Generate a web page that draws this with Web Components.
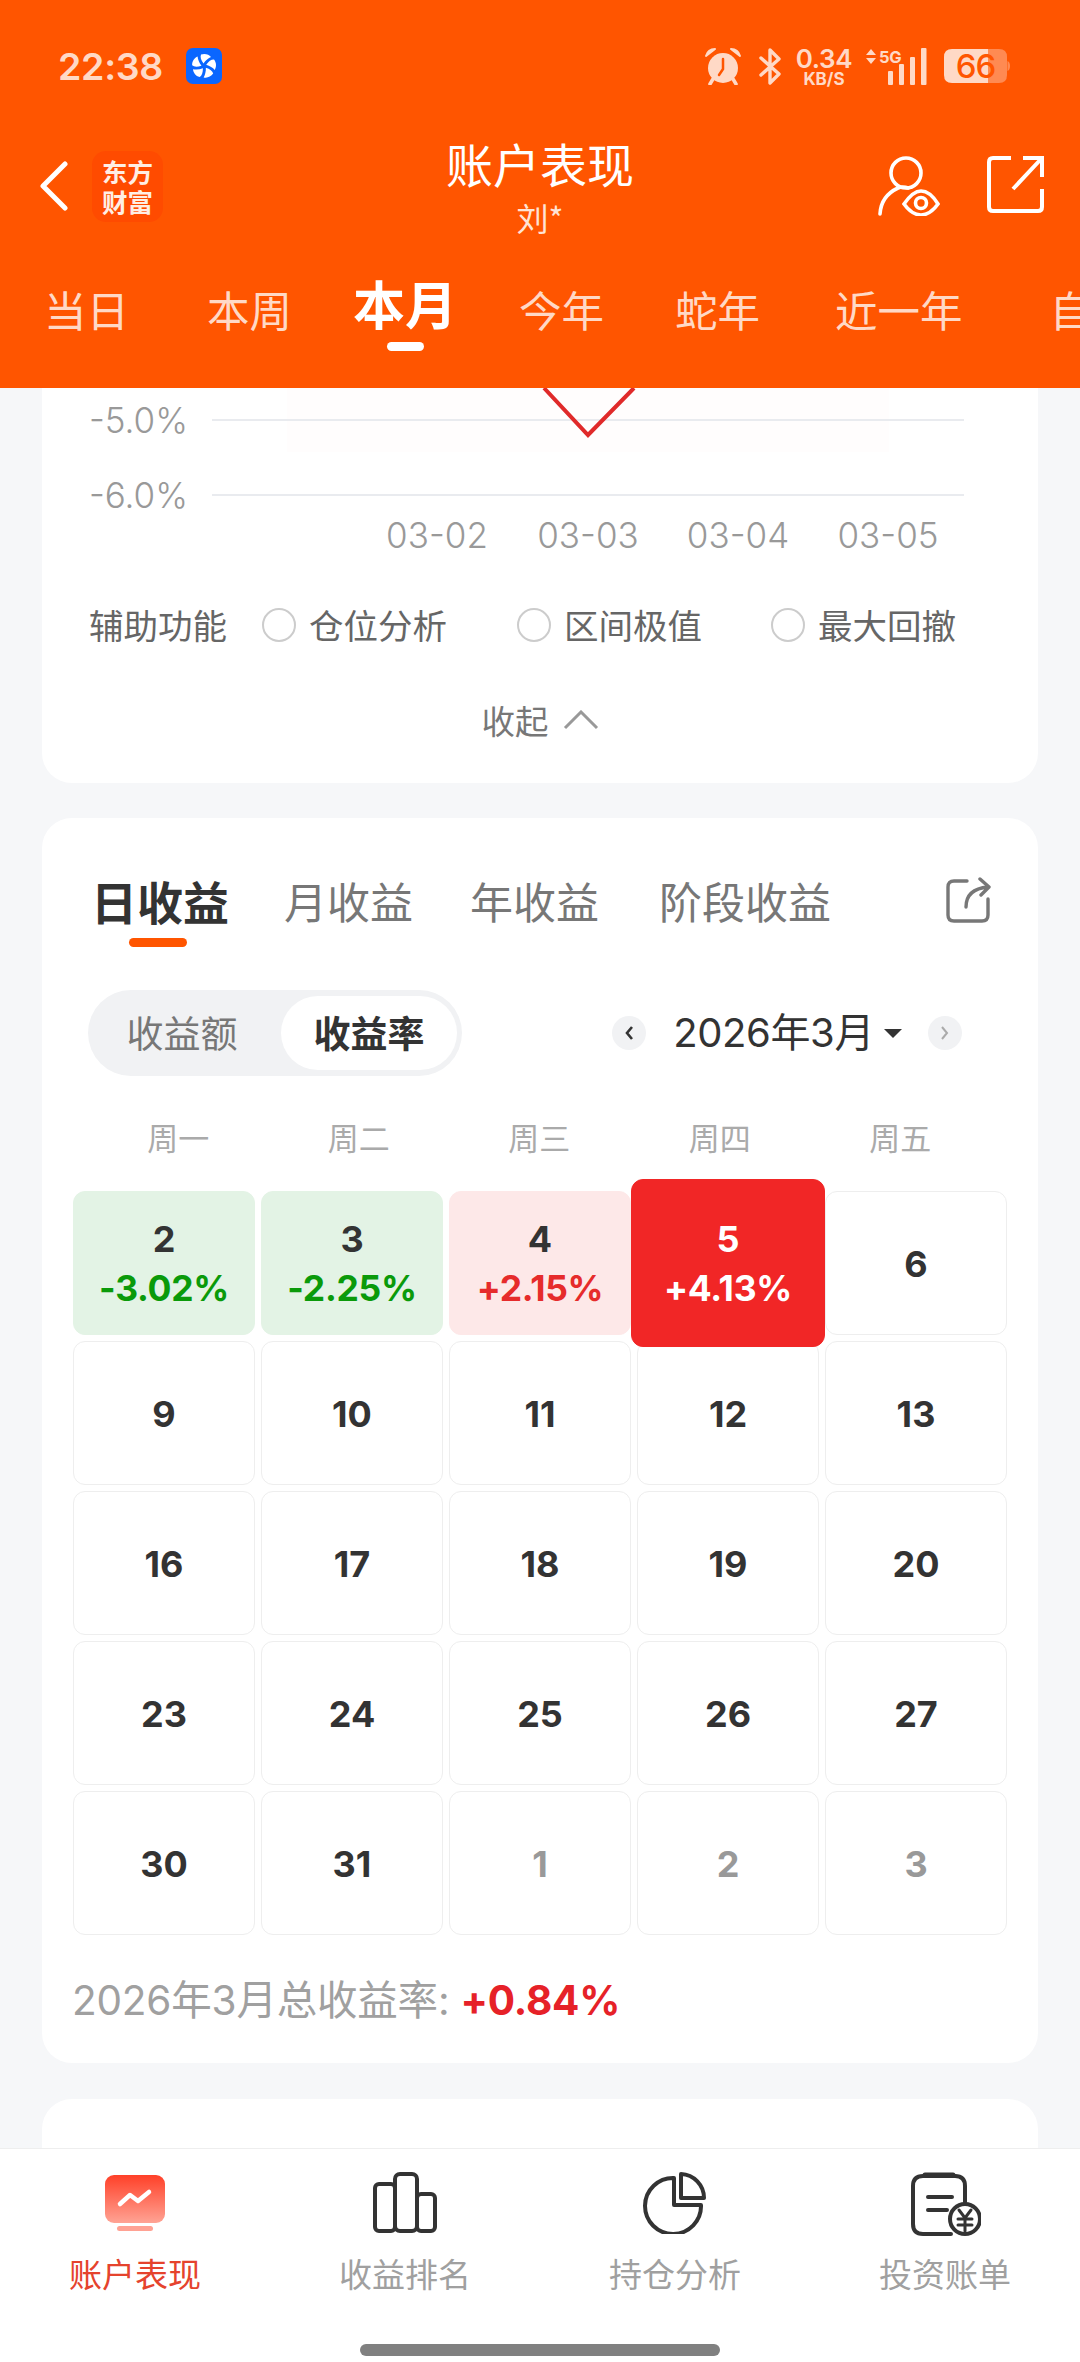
<!DOCTYPE html>
<html lang="zh">
<head>
<meta charset="utf-8">
<title>账户表现</title>
<style>
  html, body { margin: 0; background: #f6f7f9; }
  body { font-family: Inter, "Noto Sans CJK SC", sans-serif; color: #333; }
</style>
</head>
<body>
<phone-page>
  <status-bar slot="top"></status-bar>
  <account-header slot="top" title="账户表现" sub="刘*"></account-header>
  <period-bar slot="top">
    <period-tab gap="44">当日</period-tab>
    <period-tab gap="78">本周</period-tab>
    <period-tab gap="61" active>本月</period-tab>
    <period-tab gap="62">今年</period-tab>
    <period-tab gap="71">蛇年</period-tab>
    <period-tab gap="75">近一年</period-tab>
    <period-tab gap="87">自</period-tab>
  </period-bar>

  <chart-card></chart-card>

  <profit-card>
    <profit-tab active gap="0">日收益</profit-tab>
    <profit-tab gap="55">月收益</profit-tab>
    <profit-tab gap="57">年收益</profit-tab>
    <profit-tab gap="60">阶段收益</profit-tab>

    <cal-cell slot="cells" tone="loss">2<span slot="rate">-3.02%</span></cal-cell>
    <cal-cell slot="cells" tone="loss">3<span slot="rate">-2.25%</span></cal-cell>
    <cal-cell slot="cells" tone="gain">4<span slot="rate">+2.15%</span></cal-cell>
    <cal-cell slot="cells" tone="today">5<span slot="rate">+4.13%</span></cal-cell>
    <cal-cell slot="cells">6</cal-cell>
    <cal-cell slot="cells">9</cal-cell>
    <cal-cell slot="cells">10</cal-cell>
    <cal-cell slot="cells">11</cal-cell>
    <cal-cell slot="cells">12</cal-cell>
    <cal-cell slot="cells">13</cal-cell>
    <cal-cell slot="cells">16</cal-cell>
    <cal-cell slot="cells">17</cal-cell>
    <cal-cell slot="cells">18</cal-cell>
    <cal-cell slot="cells">19</cal-cell>
    <cal-cell slot="cells">20</cal-cell>
    <cal-cell slot="cells">23</cal-cell>
    <cal-cell slot="cells">24</cal-cell>
    <cal-cell slot="cells">25</cal-cell>
    <cal-cell slot="cells">26</cal-cell>
    <cal-cell slot="cells">27</cal-cell>
    <cal-cell slot="cells">30</cal-cell>
    <cal-cell slot="cells">31</cal-cell>
    <cal-cell slot="cells" tone="other">1</cal-cell>
    <cal-cell slot="cells" tone="other">2</cal-cell>
    <cal-cell slot="cells" tone="other">3</cal-cell>
  </profit-card>

  <blank-card></blank-card>

  <bottom-nav slot="bottom">
    <nav-item active>账户表现
      <svg slot="icon" width="64" height="62" viewBox="0 0 64 62">
        <defs><linearGradient id="g" x1="0" y1="0" x2="0" y2="1"><stop offset="0" stop-color="#ff4028"/><stop offset="1" stop-color="#ffa394"/></linearGradient></defs>
        <rect x="2" y="3" width="60" height="48" rx="9" fill="url(#g)"/>
        <rect x="14" y="54" width="36" height="5" rx="2.5" fill="#ffa294"/>
        <path d="M17 32 L27 23 L35 29 L46 20" fill="none" stroke="#fff" stroke-width="4.5" stroke-linecap="round" stroke-linejoin="round"/>
      </svg>
    </nav-item>
    <nav-item>收益排名
      <svg slot="icon" width="64" height="62" viewBox="0 0 64 62" fill="none" stroke="#333" stroke-width="4" stroke-linejoin="round">
        <rect x="2" y="12" width="20" height="47" rx="4"/>
        <rect x="22" y="2" width="22" height="57" rx="5"/>
        <rect x="44" y="22" width="18" height="37" rx="4"/>
      </svg>
    </nav-item>
    <nav-item>持仓分析
      <svg slot="icon" width="64" height="62" viewBox="0 0 64 62" fill="none" stroke="#333" stroke-width="4" stroke-linejoin="round">
        <path d="M31 6 A28 28 0 1 0 58 33 H31 Z"/>
        <path d="M38 2 A24 24 0 0 1 61 26 H38 Z"/>
      </svg>
    </nav-item>
    <nav-item>投资账单
      <svg slot="icon" width="72" height="64" viewBox="0 0 72 64" fill="none" stroke="#333" stroke-width="4" stroke-linecap="round">
        <path d="M46 4 H14 Q4 4 4 14 V52 Q4 62 14 62 H42"/>
        <path d="M26 4 H46 Q56 4 56 14 V30"/>
        <path d="M16 3 H44" stroke-width="5"/>
        <path d="M19 25 H43 M19 38 H38"/>
        <circle cx="56" cy="47" r="15" fill="#fff"/>
        <path d="M50 38 L56 46 L62 38 M49 47 H63 M49 53 H63 M56 46 V59" stroke-width="3"/>
      </svg>
    </nav-item>
  </bottom-nav>
</phone-page>

<script>
const pageTemplate = document.createElement('template')
pageTemplate.innerHTML = `
  <style>
    :host { display: flex; flex-direction: column; width: 1080px; height: 2362px; overflow: hidden; background: #f6f7f9; }
    header { flex: none; height: 388px; background: #ff5500; position: relative; z-index: 2; overflow: hidden; }
    main { flex: 1; min-height: 0; overflow: hidden; padding: 0 42px; display: flex; flex-direction: column; gap: 36px; }
    footer { flex: none; }
  </style>
  <header><slot name="top"></slot></header>
  <main><slot></slot></main>
  <footer><slot name="bottom"></slot></footer>
`
customElements.define('phone-page', class extends HTMLElement {
  constructor () {
    super()
    this.attachShadow({ mode: 'open' }).appendChild(pageTemplate.content.cloneNode(true))
  }
})

const statusTemplate = document.createElement('template')
statusTemplate.innerHTML = `
  <style>
    :host { display: flex; align-items: center; height: 132px; padding: 0 70px 0 58px; color: #ffd9c6; font-family: Inter, sans-serif; }
    .time { font-size: 37.5px; font-weight: 600; width: 128px; letter-spacing: -.3px; }
    .app { width: 36px; height: 36px; display: block; }
    .right { margin-left: auto; display: flex; align-items: center; }
    svg { display: block; flex: none; }
    .speed { margin-left: 13px; width: 58px; text-align: center; white-space: nowrap; }
    .speed b { display: block; font-size: 26px; line-height: 26px; font-weight: 600; letter-spacing: -.3px; }
    .speed i { display: block; font-size: 17px; line-height: 15px; font-style: normal; font-weight: 700; }
    .batt { margin-left: 17px; position: relative; width: 66px; height: 34px; }
    .batt span { position: absolute; left: 0; width: 63px; top: 0; line-height: 34px; text-align: center; color: #ff5500; font-size: 33px; font-weight: 500; letter-spacing: -1px; }
  </style>
  <div class="time">22:38</div>
  <svg class="app" viewBox="0 0 36 36">
    <rect width="36" height="36" rx="7" fill="#0a66ff"/>
    <g fill="#fff">
      <path id="b" d="M17.5 15.5 C15 12 14 9 15 6.5 C19 5 23 6.5 25 9 C22.5 10 19.5 12.5 17.5 15.5 Z"/>
      <use href="#b" transform="rotate(72 18 18)"/>
      <use href="#b" transform="rotate(144 18 18)"/>
      <use href="#b" transform="rotate(216 18 18)"/>
      <use href="#b" transform="rotate(288 18 18)"/>
    </g>
  </svg>
  <div class="right">
    <svg width="38" height="38" viewBox="0 0 38 38">
      <circle cx="19" cy="21" r="15" fill="#ffd9c6"/>
      <path d="M19 12 V22 L15 28" stroke="#ff5500" stroke-width="2.5" fill="none" stroke-linecap="round"/>
      <path d="M2 9 Q4 2 11 2 Z M36 9 Q34 2 27 2 Z" fill="#ffd9c6" stroke="#ffd9c6" stroke-width="2" stroke-linejoin="round"/>
      <path d="M9 32 L6 37 M29 32 L32 37" stroke="#ffd9c6" stroke-width="3.5" stroke-linecap="round"/>
    </svg>
    <svg style="margin-left:17px" width="23" height="37" viewBox="0 0 23 37" fill="none" stroke="#ffd9c6" stroke-width="3.4" stroke-linejoin="round" stroke-linecap="round">
      <path d="M2 10 L20 26 L11 35 V2 L20 11 L2 27"/>
    </svg>
    <div class="speed"><b>0.34</b><i>KB/S</i></div>
    <svg style="margin-left:12px" width="62" height="37" viewBox="0 0 62 37">
      <path d="M1 7 L6 1 L11 7 Z M1 10 L6 16 L11 10 Z" fill="#ffd9c6"/>
      <text x="14" y="15" font-family="Inter, sans-serif" font-size="16.5" font-weight="700" fill="#ffd9c6" letter-spacing="-.4">5G</text>
      <g fill="#ffd9c6">
        <rect x="23" y="23" width="5" height="14" rx="1"/>
        <rect x="34" y="16" width="5" height="21" rx="1"/>
        <rect x="45" y="9" width="5" height="28" rx="1"/>
        <rect x="56" y="0" width="5.5" height="37" rx="1"/>
      </g>
    </svg>
    <div class="batt">
      <svg width="66" height="34" viewBox="0 0 66 34">
        <path d="M44 0 H8 Q0 0 0 8 V26 Q0 34 8 34 H44 Z" fill="#ffd9c6"/>
        <path d="M44 0 H55 Q63 0 63 8 V26 Q63 34 55 34 H44 Z" fill="#ff8a52"/>
        <path d="M63.5 12 Q66 13 66 17 Q66 21 63.5 22 Z" fill="#ff8a52"/>
      </svg>
      <span>66</span>
    </div>
  </div>
`
customElements.define('status-bar', class extends HTMLElement {
  constructor () {
    super()
    this.attachShadow({ mode: 'open' }).appendChild(statusTemplate.content.cloneNode(true))
  }
})

const headerTemplate = document.createElement('template')
headerTemplate.innerHTML = `
  <style>
    :host { display: grid; grid-template-columns: 1fr auto 1fr; height: 112px; padding-top: 4px; color: #fff; font-family: "Noto Sans CJK SC", sans-serif; }
    .left { display: flex; align-items: center; padding-left: 40px; gap: 24px; height: 100px; }
    .logo { width: 71px; height: 71px; background: #ff4b00; border-radius: 14px; font-size: 25.5px; line-height: 30px; font-weight: 700; text-align: center; display: flex; align-items: center; justify-content: center; color: #ffeee4; }
    .mid { text-align: center; }
    .title { font-size: 47px; line-height: 54px; }
    .sub { font-size: 32px; line-height: 38px; margin-top: 8px; color: #ffe3d5; }
    .right { display: flex; justify-content: flex-end; padding-right: 36px; gap: 47px; padding-top: 20px; }
    svg { display: block; }
  </style>
  <div class="left">
    <svg width="28" height="50" viewBox="0 0 28 50"><path d="M25 3 L3 25 L25 47" fill="none" stroke="#fff" stroke-width="5" stroke-linecap="round" stroke-linejoin="round"/></svg>
    <div class="logo">东方<br>财富</div>
  </div>
  <div class="mid"><div class="title"></div><div class="sub"></div></div>
  <div class="right">
    <svg width="62" height="60" viewBox="0 0 62 60" fill="none" stroke="#fff" stroke-width="3.6" stroke-linecap="round">
      <circle cx="28" cy="17" r="15"/>
      <path d="M2 58 Q3 40 20 32 Q25 30 30 32"/>
      <path d="M26 48 Q35 35 43 35 Q52 35 60 48 Q52 59 43 59 Q34 59 26 48 Z"/>
      <circle cx="43" cy="47" r="5.5"/>
    </svg>
    <svg width="57" height="57" viewBox="0 0 57 57" fill="none" stroke="#fff" stroke-width="4" stroke-linecap="square">
      <path d="M22 2 H6 Q2 2 2 6 V51 Q2 55 6 55 H51 Q55 55 55 51 V35"/>
      <path d="M36 2 H55 V21 M55 2 L26 33" stroke-linecap="butt"/>
    </svg>
  </div>
`
customElements.define('account-header', class extends HTMLElement {
  constructor () {
    super()
    this.attachShadow({ mode: 'open' }).appendChild(headerTemplate.content.cloneNode(true))
  }

  connectedCallback () {
    this.shadowRoot.querySelector('.title').textContent = this.getAttribute('title')
    this.shadowRoot.querySelector('.sub').textContent = this.getAttribute('sub')
  }
})

const periodBarTemplate = document.createElement('template')
periodBarTemplate.innerHTML = `
  <style>
    :host { display: flex; align-items: flex-start; overflow: hidden; padding-top: 30px; }
  </style>
  <slot></slot>
`
customElements.define('period-bar', class extends HTMLElement {
  constructor () {
    super()
    this.attachShadow({ mode: 'open' }).appendChild(periodBarTemplate.content.cloneNode(true))
  }
})

const periodTabTemplate = document.createElement('template')
periodTabTemplate.innerHTML = `
  <style>
    :host { display: flex; flex: none; flex-direction: column; align-items: center; padding-top: 6px; font: 42.5px/50px "Noto Sans CJK SC", sans-serif; color: #ffd9c6; white-space: nowrap; }
    :host([active]) { padding-top: 0; font-size: 52px; font-weight: 700; color: #fff; }
    i { display: none; }
    :host([active]) i { display: block; width: 37px; height: 9px; margin-top: 14px; border-radius: 5px; background: #fff; }
  </style>
  <div><slot></slot></div>
  <i></i>
`
customElements.define('period-tab', class extends HTMLElement {
  constructor () {
    super()
    this.attachShadow({ mode: 'open' }).appendChild(periodTabTemplate.content.cloneNode(true))
  }

  connectedCallback () {
    this.style.marginLeft = this.getAttribute('gap') + 'px'
  }
})

const chartTemplate = document.createElement('template')
chartTemplate.innerHTML = `
  <style>
    :host { display: block; flex: none; height: 395px; background: #fff; border-radius: 0 0 30px 30px; font-family: "Noto Sans CJK SC", sans-serif; }
    svg { display: block; }
    text { font-family: Inter, sans-serif; font-size: 35px; font-weight: 300; fill: #999; }
    .aux { display: grid; grid-template-columns: 173px 255px 254px auto; align-items: center; height: 92px; padding-left: 47px; }
    .aux span { font-size: 34.5px; color: #666; }
    .fold { display: flex; align-items: center; justify-content: center; gap: 14px; height: 98px; font-size: 33.5px; color: #777; }
    .fold svg { margin-top: 2px; }
  </style>
  <svg width="996" height="190" viewBox="0 0 996 190">
    <rect x="245" y="0" width="602" height="64" fill="#fffdfd"/>
    <path d="M170 32 H922 M170 107 H922" stroke="#e9ebef" stroke-width="2"/>
    <path d="M502 0 L546 47 L592 0" fill="none" stroke="#e02a2a" stroke-width="4"/>
    <text x="146" y="45" text-anchor="end">-5.0%</text>
    <text x="146" y="120" text-anchor="end">-6.0%</text>
    <text x="395" y="160" text-anchor="middle">03-02</text>
    <text x="546" y="160" text-anchor="middle">03-03</text>
    <text x="696" y="160" text-anchor="middle">03-04</text>
    <text x="846" y="160" text-anchor="middle">03-05</text>
  </svg>
  <div class="aux">
    <span>辅助功能</span>
    <aux-option>仓位分析</aux-option>
    <aux-option>区间极值</aux-option>
    <aux-option>最大回撤</aux-option>
  </div>
  <div class="fold">收起
    <svg width="36" height="20" viewBox="0 0 36 20"><path d="M2 18 L18 2 L34 18" fill="none" stroke="#999" stroke-width="3"/></svg>
  </div>
`
customElements.define('chart-card', class extends HTMLElement {
  constructor () {
    super()
    this.attachShadow({ mode: 'open' }).appendChild(chartTemplate.content.cloneNode(true))
  }
})

const auxTemplate = document.createElement('template')
auxTemplate.innerHTML = `
  <style>
    :host { display: flex; align-items: center; gap: 13px; font-size: 34.5px; color: #666; }
    i { width: 30px; height: 30px; border: 2.5px solid #ccc; border-radius: 50%; margin-top: 2px; }
  </style>
  <i></i><slot></slot>
`
customElements.define('aux-option', class extends HTMLElement {
  constructor () {
    super()
    this.attachShadow({ mode: 'open' }).appendChild(auxTemplate.content.cloneNode(true))
  }
})

const profitTemplate = document.createElement('template')
profitTemplate.innerHTML = `
  <style>
    :host { display: block; flex: none; margin-top: -1px; background: #fff; border-radius: 30px; padding-bottom: 37px; font-family: "Noto Sans CJK SC", Inter, sans-serif; }
    .tabs { display: flex; align-items: flex-start; padding: 56px 46px 0 49px; }
    .tabs svg { margin: 3px 0 0 auto; display: block; }
    .ctrl { display: flex; align-items: center; justify-content: space-between; margin-top: 43px; padding: 0 76px 0 46px; }
    .seg { display: flex; width: 374px; height: 86px; box-sizing: border-box; padding: 6px 5px 6px 0; background: #f1f2f4; border-radius: 43px; font-size: 37px; }
    .seg span { color: #777; width: 188px; margin-right: 5px; text-align: center; line-height: 72px; }
    .seg b { width: 176px; border-radius: 37px; background: #fff; color: #333; text-align: center; line-height: 72px; }
    .month { display: flex; align-items: center; }
    .month i { width: 34px; height: 34px; border-radius: 50%; background: #f1f2f4; display: flex; align-items: center; justify-content: center; }
    .month span { font: 40px/50px Inter, "Noto Sans CJK SC", sans-serif; color: #333; margin-left: 27px; letter-spacing: -.4px; }
    .month u { width: 0; height: 0; margin: 0 26px 0 10px; border: 9px solid transparent; border-top: 9px solid #333; border-bottom: 0; }
    .week { display: grid; grid-template-columns: repeat(5, 180.5px); margin: 41px 0 0 46px; font-size: 31px; line-height: 40px; color: #aaa; text-align: center; }
    .cells { display: grid; grid-template-columns: repeat(5, 182px); grid-auto-rows: 144px; gap: 6px; margin: 34px 0 0 31px; }
    .total { margin: 41px 0 0 30px; font: 40.5px/50px Inter, "Noto Sans CJK SC", sans-serif; color: #a0a0a0; letter-spacing: -.2px; white-space: nowrap; }
    .total b { color: #e62128; font-weight: 700; }
  </style>
  <div class="tabs">
    <slot></slot>
    <svg width="46" height="46" viewBox="0 0 46 46" fill="none" stroke="#777" stroke-width="3.4" stroke-linecap="round" stroke-linejoin="round">
      <path d="M21 4 H8 Q2 4 2 10 V38 Q2 44 8 44 H36 Q42 44 42 38 V22"/>
      <path d="M20 30 Q20 12 42 10 M34 2 L43 10 L35 18"/>
    </svg>
  </div>
  <div class="ctrl">
    <div class="seg"><span>收益额</span><b>收益率</b></div>
    <div class="month">
      <i><svg width="10" height="16" viewBox="0 0 10 16"><path d="M8 2 L3 8 L8 14" fill="none" stroke="#333" stroke-width="2.6"/></svg></i>
      <span>2026年3月</span>
      <u></u>
      <i><svg width="10" height="16" viewBox="0 0 10 16"><path d="M2 2 L7 8 L2 14" fill="none" stroke="#aaa" stroke-width="2"/></svg></i>
    </div>
  </div>
  <div class="week"><div>周一</div><div>周二</div><div>周三</div><div>周四</div><div>周五</div></div>
  <div class="cells"><slot name="cells"></slot></div>
  <div class="total">2026年3月总收益率: <b>+0.84%</b></div>
`
customElements.define('profit-card', class extends HTMLElement {
  constructor () {
    super()
    this.attachShadow({ mode: 'open' }).appendChild(profitTemplate.content.cloneNode(true))
  }
})

const profitTabTemplate = document.createElement('template')
profitTabTemplate.innerHTML = `
  <style>
    :host { display: flex; flex-direction: column; align-items: center; font-size: 43px; line-height: 52px; color: #777; }
    :host([active]) { font-size: 46px; font-weight: 700; color: #333; }
    i { display: none; }
    :host([active]) i { display: block; width: 58px; height: 9px; margin: 12px 4px 0 0; border-radius: 5px; background: #ff5500; }
  </style>
  <div><slot></slot></div>
  <i></i>
`
customElements.define('profit-tab', class extends HTMLElement {
  constructor () {
    super()
    this.attachShadow({ mode: 'open' }).appendChild(profitTabTemplate.content.cloneNode(true))
  }

  connectedCallback () {
    this.style.marginLeft = this.getAttribute('gap') + 'px'
  }
})

const cellTemplate = document.createElement('template')
cellTemplate.innerHTML = `
  <style>
    :host { display: flex; flex-direction: column; align-items: center; justify-content: center; box-sizing: border-box; border: 1.5px solid #eeeeee; border-radius: 12px; font: 700 36px/49px Inter, sans-serif; color: #333; background: #fff; padding-top: 2px; }
    :host([tone="other"]) { color: #999; }
    :host([tone="loss"]) { background: #e3f3e5; border-color: #e3f3e5; --rate: #0a9a0a; }
    :host([tone="gain"]) { background: #fde8e8; border-color: #fde8e8; --rate: #e62b2b; }
    :host([tone="today"]) { background: #f12626; border-color: #f12626; color: #fff; --rate: #fff; margin: -12px -6px; position: relative; z-index: 1; }
    .rate { color: var(--rate); letter-spacing: -.3px; font-size: 35.5px; }
    .rate:empty { display: none; }
  </style>
  <div><slot></slot></div>
  <div class="rate"><slot name="rate"></slot></div>
`
customElements.define('cal-cell', class extends HTMLElement {
  constructor () {
    super()
    this.attachShadow({ mode: 'open' }).appendChild(cellTemplate.content.cloneNode(true))
  }
})

const blankTemplate = document.createElement('template')
blankTemplate.innerHTML = `
  <style>
    :host { display: block; flex: none; height: 200px; background: #fff; border-radius: 30px; }
  </style>
`
customElements.define('blank-card', class extends HTMLElement {
  constructor () {
    super()
    this.attachShadow({ mode: 'open' }).appendChild(blankTemplate.content.cloneNode(true))
  }
})

const navTemplate = document.createElement('template')
navTemplate.innerHTML = `
  <style>
    :host { display: block; height: 214px; box-sizing: border-box; border-top: 1.5px solid #eeeeee; background: #fff; }
    .items { display: grid; grid-template-columns: repeat(4, 1fr); }
    .home { width: 360px; height: 12px; margin: 51px auto 0; border-radius: 6px; background: #808080; }
  </style>
  <div class="items"><slot></slot></div>
  <div class="home"></div>
`
customElements.define('bottom-nav', class extends HTMLElement {
  constructor () {
    super()
    this.attachShadow({ mode: 'open' }).appendChild(navTemplate.content.cloneNode(true))
  }
})

const navItemTemplate = document.createElement('template')
navItemTemplate.innerHTML = `
  <style>
    :host { display: flex; flex-direction: column; align-items: center; padding-top: 23px; font: 33px/40px "Noto Sans CJK SC", sans-serif; color: #a0a0a0; }
    :host([active]) { color: #e5432d; }
    .icon { height: 64px; margin-bottom: 17px; }
  </style>
  <div class="icon"><slot name="icon"></slot></div>
  <slot></slot>
`
customElements.define('nav-item', class extends HTMLElement {
  constructor () {
    super()
    this.attachShadow({ mode: 'open' }).appendChild(navItemTemplate.content.cloneNode(true))
  }
})
</script>
</body>
</html>
